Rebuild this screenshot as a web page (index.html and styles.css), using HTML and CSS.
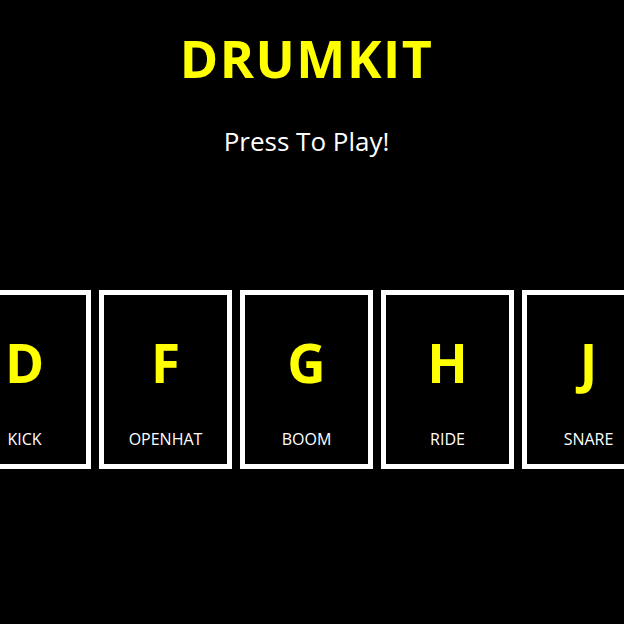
FILE: index.html
```html
<!DOCTYPE html>
<html lang="en">
<head>
<meta charset="utf-8">
<title>Drumkit</title>
<link rel="stylesheet" href="styles.css">
</head>
<body>
<main class="page">
  <h1 class="title">DRUMKIT</h1>
  <p class="subtitle">Press To Play!</p>
  <div class="keys">
    <div class="key"><span class="letter">D</span><span class="sound">KICK</span></div>
    <div class="key"><span class="letter">F</span><span class="sound">OPENHAT</span></div>
    <div class="key"><span class="letter">G</span><span class="sound">BOOM</span></div>
    <div class="key"><span class="letter">H</span><span class="sound">RIDE</span></div>
    <div class="key"><span class="letter">J</span><span class="sound">SNARE</span></div>
  </div>
</main>
</body>
</html>
```
FILE: styles.css
```css
html, body {
  margin: 0;
  padding: 0;
  background: #000;
  overflow: hidden;
}
body {
  font-family: "Open Sans", "Noto Sans", sans-serif;
  color: #fff;
  height: 624px;
}
.page {
  width: 613px;
  display: flex;
  flex-direction: column;
  align-items: center;
}
.title {
  margin: 30px 0 0;
  font-size: 52px;
  line-height: 56px;
  font-weight: 700;
  color: #ffff00;
  letter-spacing: 1.5px;
}
.subtitle {
  margin: 39px 0 0;
  font-size: 26px;
  line-height: 32px;
}
.keys {
  margin-top: 133px;
  display: flex;
  justify-content: center;
  gap: 8px;
  width: 613px;
}
.key {
  flex: 0 0 auto;
  box-sizing: border-box;
  width: 133px;
  height: 179px;
  border: 5px solid #fff;
  display: flex;
  flex-direction: column;
  align-items: center;
}
.letter {
  margin-top: 40px;
  font-size: 53px;
  line-height: 56px;
  font-weight: 700;
  color: #ffff00;
}
.sound {
  margin-top: 38px;
  font-size: 16px;
  line-height: 20px;
}
```
